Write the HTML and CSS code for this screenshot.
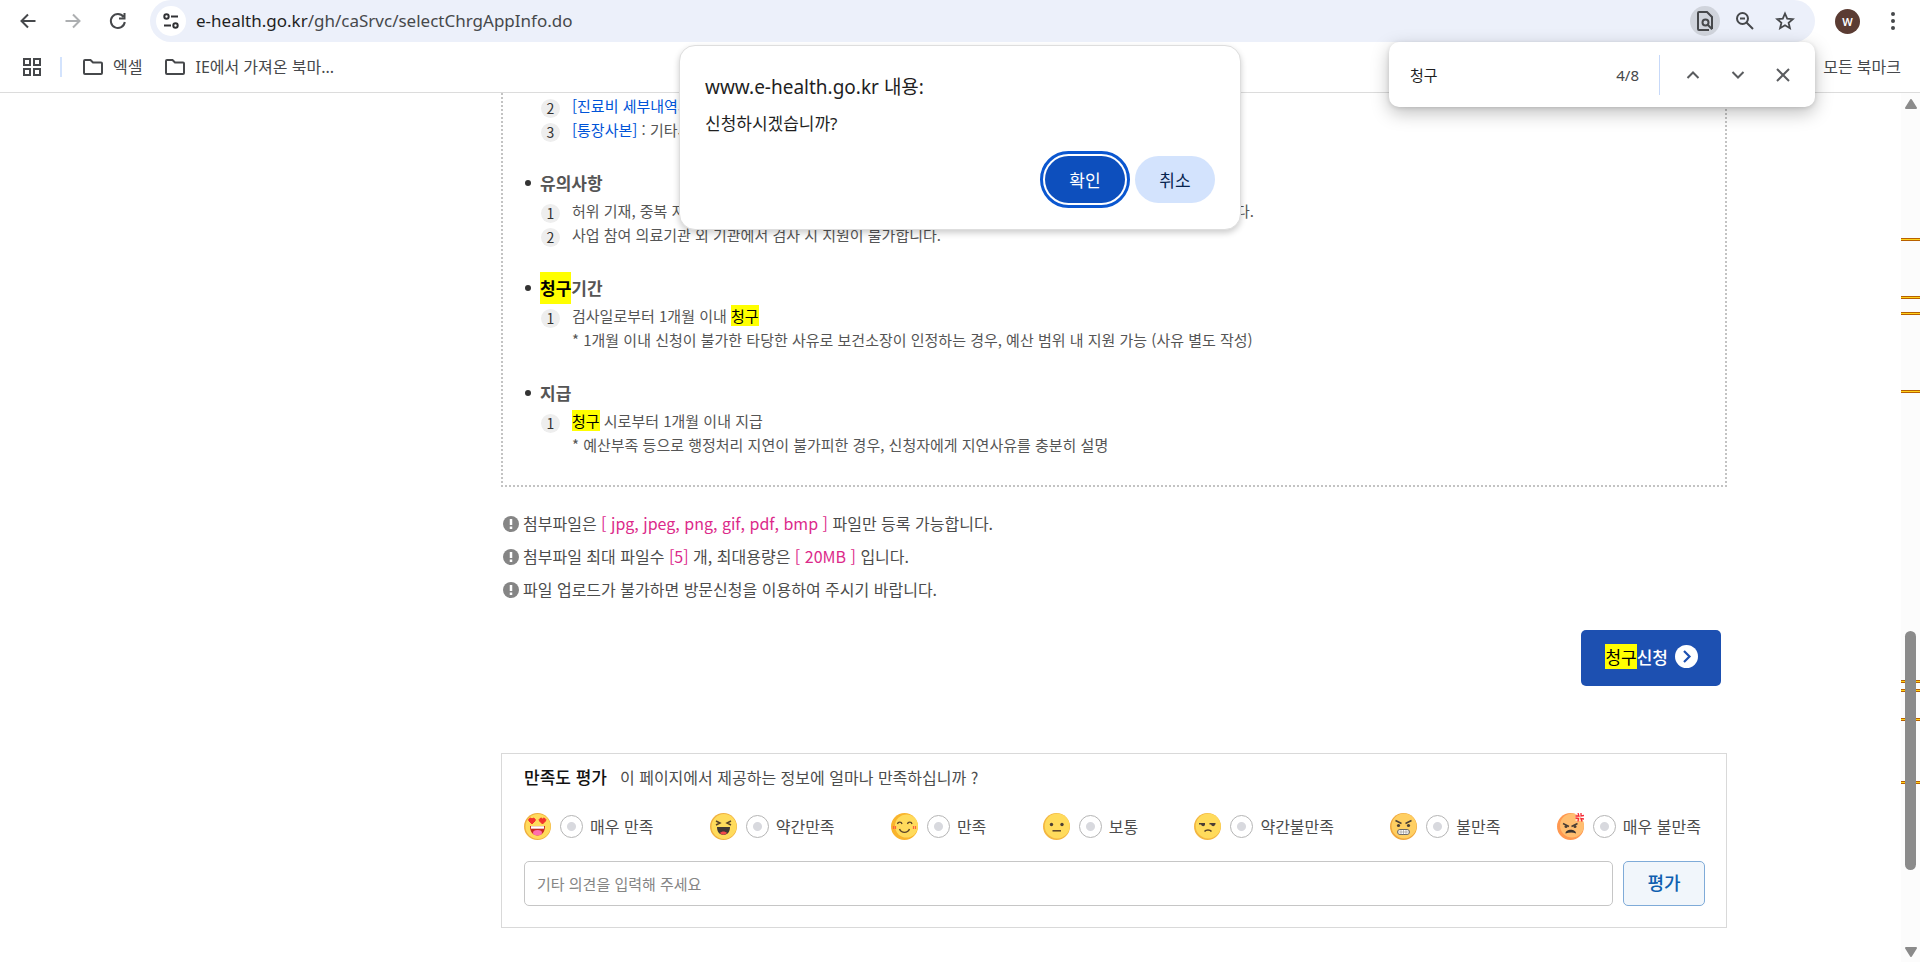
FILE: index.html
```html
<!DOCTYPE html>
<html lang="ko">
<head>
    <meta charset="UTF-8">
    <meta name="viewport" content="width=device-width, initial-scale=1.0">
    <title>e보건소 - 청구신청</title>
    <link rel="stylesheet" href="styles.css">
</head>
<body>
    <header class="browser">
        <div class="toolbar">
            <div class="nav-buttons">
                <button type="button" class="icon-btn" aria-label="뒤로">
                    <svg width="20" height="20" viewBox="0 0 20 20" fill="none" stroke="#46484b" stroke-width="2"><path d="M17.500 10H3.500M10 3.500L3.500 10l6.500 6.500"/></svg>
                </button>
                <button type="button" class="icon-btn" aria-label="앞으로">
                    <svg width="20" height="20" viewBox="0 0 20 20" fill="none" stroke="#adafb1" stroke-width="2"><path d="M2.500 10h14M10 3.500l6.500 6.500-6.500 6.500"/></svg>
                </button>
                <button type="button" class="icon-btn" aria-label="새로고침">
                    <svg width="20" height="20" viewBox="0 0 20 20" fill="none" stroke="#46484b" stroke-width="2"><path d="M15.500 5.800A7 7 0 1 0 16.800 11M16.500 2v5.500H11"/></svg>
                </button>
            </div>
            <div class="omnibox">
                <button type="button" class="round-btn site-info" aria-label="사이트 정보">
                    <svg width="18" height="18" viewBox="0 0 18 18" fill="none" stroke="#303134" stroke-width="2"><circle cx="4.500" cy="4.500" r="2.200"/><path d="M9 4.500h7M2 13.500h7"/><circle cx="13.500" cy="13.500" r="2.200"/></svg>
                </button>
                <div class="url" role="textbox" aria-label="주소창"><span class="host">e-health.go.kr</span>/gh/caSrvc/selectChrgAppInfo.do</div>
                <div class="omnibox-actions">
                    <button type="button" class="round-btn active" aria-label="페이지에서 찾기">
                        <svg width="20" height="22" viewBox="0 0 20 22" fill="none" stroke="#46484b" stroke-width="2"><path d="M14 20H4a1 1 0 0 1-1-1V3a1 1 0 0 1 1-1h8l5 5v12"/><circle cx="10.500" cy="12.500" r="3"/><path d="M12.700 14.700l4.500 4.500"/></svg>
                    </button>
                    <button type="button" class="round-btn" aria-label="축소">
                        <svg width="20" height="20" viewBox="0 0 20 20" fill="none" stroke="#46484b" stroke-width="2"><circle cx="7.500" cy="7.500" r="5.500"/><path d="M11.500 11.500l6.500 6.500M5 7.500h5"/></svg>
                    </button>
                    <button type="button" class="round-btn" aria-label="북마크 추가">
                        <svg width="20" height="20" viewBox="0 0 20 20" fill="none" stroke="#46484b" stroke-width="1.800"><path d="M10 2.500l2.200 5.100 5.600.5-4.200 3.700 1.300 5.400L10 14.300l-4.900 2.900 1.300-5.400L2.200 8.100l5.600-.5z"/></svg>
                    </button>
                </div>
            </div>
            <div class="profile">
                <button type="button" class="avatar">W</button>
                <button type="button" class="icon-btn" aria-label="메뉴">
                    <svg width="20" height="20" viewBox="0 0 20 20" fill="#46484b"><circle cx="10" cy="3" r="2"/><circle cx="10" cy="10" r="2"/><circle cx="10" cy="17" r="2"/></svg>
                </button>
            </div>
        </div>
        <nav class="bookmarks">
            <button type="button" class="apps" aria-label="앱">
                <svg width="20" height="20" viewBox="0 0 20 20" fill="none" stroke="#46484b" stroke-width="2"><path d="M2 2h6v6H2zM12 2h6v6h-6zM2 12h6v6H2zM12 12h6v6h-6z"/></svg>
            </button>
            <span class="divider"></span>
            <a class="bookmark" href="#">
                <svg width="22" height="18" viewBox="0 0 22 18" fill="none" stroke="#46484b" stroke-width="2"><path d="M2 15V3a1 1 0 0 1 1-1h5.500L11 4.500h8a1 1 0 0 1 1 1V15a1 1 0 0 1-1 1H3a1 1 0 0 1-1-1z"/></svg>
                <span>엑셀</span>
            </a>
            <a class="bookmark" href="#">
                <svg width="22" height="18" viewBox="0 0 22 18" fill="none" stroke="#46484b" stroke-width="2"><path d="M2 15V3a1 1 0 0 1 1-1h5.500L11 4.500h8a1 1 0 0 1 1 1V15a1 1 0 0 1-1 1H3a1 1 0 0 1-1-1z"/></svg>
                <span>IE에서 가져온 북마...</span>
            </a>
            <a class="bookmark all" href="#"><span>모든 북마크</span></a>
        </nav>

        <div class="find-bar">
            <input type="text" class="find-input" value="청구" aria-label="찾기">
            <span class="find-count">4/8</span>
            <span class="find-divider"></span>
            <div class="find-buttons">
                <button type="button" class="icon-btn" aria-label="이전">
                    <svg width="16" height="16" viewBox="0 0 16 16" fill="none" stroke="#5a5c5f" stroke-width="2"><path d="M2.500 11L8 5.500l5.500 5.500"/></svg>
                </button>
                <button type="button" class="icon-btn" aria-label="다음">
                    <svg width="16" height="16" viewBox="0 0 16 16" fill="none" stroke="#5a5c5f" stroke-width="2"><path d="M2.500 5L8 10.500 13.500 5"/></svg>
                </button>
                <button type="button" class="icon-btn" aria-label="닫기">
                    <svg width="16" height="16" viewBox="0 0 16 16" fill="none" stroke="#5a5c5f" stroke-width="2"><path d="M2 2l12 12M14 2L2 14"/></svg>
                </button>
            </div>
        </div>

        <div class="dialog" role="dialog" aria-labelledby="dialog-title">
            <h2 id="dialog-title">www.e-health.go.kr 내용:</h2>
            <p>신청하시겠습니까?</p>
            <div class="dialog-buttons">
                <button type="button" class="ok">확인</button>
                <button type="button" class="cancel">취소</button>
            </div>
        </div>
    </header>

    <div class="viewport">
        <main class="page">
            <section class="guide">
                <ol>
                    <li><span class="num">2</span><p><a href="#">[진료비 세부내역서]</a></p></li>
                    <li><span class="num">3</span><p><a href="#">[통장사본]</a> : 기타서류</p></li>
                </ol>
                <h3>유의사항</h3>
                <ol>
                    <li><span class="num">1</span><p class="long"><span>허위 기재, 중복 지원</span><span>다.</span></p></li>
                    <li><span class="num">2</span><p>사업 참여 의료기관 외 기관에서 검사 시 지원이 불가합니다.</p></li>
                </ol>
                <h3><mark>청구</mark>기간</h3>
                <ol>
                    <li><span class="num">1</span><p>검사일로부터 1개월 이내 <mark>청구</mark><br>* 1개월 이내 신청이 불가한 타당한 사유로 보건소장이 인정하는 경우, 예산 범위 내 지원 가능 (사유 별도 작성)</p></li>
                </ol>
                <h3>지급</h3>
                <ol>
                    <li><span class="num">1</span><p><mark>청구</mark> 시로부터 1개월 이내 지급<br>* 예산부족 등으로 행정처리 지연이 불가피한 경우, 신청자에게 지연사유를 충분히 설명</p></li>
                </ol>
            </section>

            <ul class="notes">
                <li>
                    <svg width="16" height="16" viewBox="0 0 16 16"><circle cx="8" cy="8" r="8" fill="#858585"/><path d="M8 3v6M8 10.500v2.500" stroke="#fff" stroke-width="2.500"/></svg>
                    <p>첨부파일은 <em>[ jpg, jpeg, png, gif, pdf, bmp ]</em> 파일만 등록 가능합니다.</p>
                </li>
                <li>
                    <svg width="16" height="16" viewBox="0 0 16 16"><circle cx="8" cy="8" r="8" fill="#858585"/><path d="M8 3v6M8 10.500v2.500" stroke="#fff" stroke-width="2.500"/></svg>
                    <p>첨부파일 최대 파일수 <em>[5]</em> 개, 최대용량은 <em>[ 20MB ]</em> 입니다.</p>
                </li>
                <li>
                    <svg width="16" height="16" viewBox="0 0 16 16"><circle cx="8" cy="8" r="8" fill="#858585"/><path d="M8 3v6M8 10.500v2.500" stroke="#fff" stroke-width="2.500"/></svg>
                    <p>파일 업로드가 불가하면 방문신청을 이용하여 주시기 바랍니다.</p>
                </li>
            </ul>

            <div class="actions">
                <button type="button" class="apply">
                    <span><mark>청구</mark>신청</span>
                    <svg width="23" height="23" viewBox="0 0 23 23"><circle cx="11.500" cy="11.500" r="11.500" fill="#fff"/><path d="M9 6l5.500 5.500L9 17" fill="none" stroke="#1d50b1" stroke-width="2.200"/></svg>
                </button>
            </div>

            <form class="survey">
                <div class="survey-title">
                    <strong>만족도 평가</strong>
                    <span>이 페이지에서 제공하는 정보에 얼마나 만족하십니까 ?</span>
                </div>
                <div class="ratings">
                    <label>
                        <svg width="27" height="27" viewBox="0 0 27 27"><circle cx="13.500" cy="13.500" r="13.500" fill="#f0b040"/><circle cx="14" cy="13.500" r="12.500" fill="#ffdb5c"/><path d="M8 11L5 8a1.700 1.700 0 0 1 3-2 1.700 1.700 0 0 1 3 2zM18.500 11l-3-3a1.700 1.700 0 0 1 3-2 1.700 1.700 0 0 1 3 2z" fill="#f3332e" stroke="#f3332e"/><path d="M6 13h15c0 6-3 9.500-7.500 9.500S6 19 6 13z" fill="#c92a20"/><path d="M7 13.200h13v2.500H7z" fill="#fff"/><ellipse cx="13.500" cy="19.800" rx="4.500" ry="2.700" fill="#ff6fae"/></svg>
                        <input type="radio" name="score" value="7">매우 만족
                    </label>
                    <label>
                        <svg width="27" height="27" viewBox="0 0 27 27"><circle cx="13.500" cy="13.500" r="13.500" fill="#f0b040"/><circle cx="14" cy="13.500" r="12.500" fill="#ffdb5c"/><path d="M6 8l4 2-4 2M21 8l-4 2 4 2" fill="none" stroke="#5a4328" stroke-width="1.500"/><path d="M7 14h13c0 5-2.500 7.800-6.500 7.800S7 19 7 14z" fill="#403734"/><path d="M10 20c1.800-2 5.200-2 7 0-1.800 2.200-5.200 2.200-7 0z" fill="#f4494a"/></svg>
                        <input type="radio" name="score" value="6">약간만족
                    </label>
                    <label>
                        <svg width="27" height="27" viewBox="0 0 27 27"><circle cx="13.500" cy="13.500" r="13.500" fill="#f9b42c"/><circle cx="15.500" cy="13" r="11.500" fill="#ffdb5c"/><path d="M6.500 11c.5-2.500 4-2.500 4.500 0M16.500 11c.5-2.500 4-2.500 4.500 0M8.500 16c2 4.500 8 4.500 10 0" fill="none" stroke="#5a4328" stroke-width="1.400"/><path d="M2.500 13v3M4.500 13v3M22.500 13v3M24.500 13v3" stroke="#ff6040" stroke-width="1.200"/></svg>
                        <input type="radio" name="score" value="5">만족
                    </label>
                    <label>
                        <svg width="27" height="27" viewBox="0 0 27 27"><circle cx="13.500" cy="13.500" r="13.500" fill="#f3b640"/><circle cx="14.200" cy="13" r="12.500" fill="#ffdb5c"/><circle cx="8.500" cy="11.500" r="1.700" fill="#4b3f35"/><circle cx="19" cy="11.500" r="1.700" fill="#4b3f35"/><path d="M9.500 17.800h8.500" stroke="#5a4328" stroke-width="1.500"/></svg>
                        <input type="radio" name="score" value="4">보통
                    </label>
                    <label>
                        <svg width="27" height="27" viewBox="0 0 27 27"><circle cx="13.500" cy="13.500" r="13.500" fill="#f3b640"/><circle cx="14.200" cy="13" r="12.500" fill="#ffdb5c"/><path d="M5 10.700h6M15.500 10.700h6" stroke="#4b3f35" stroke-width="1.400"/><path d="M7 11h4c0 3-3.500 3-4 0zM17 11h4c0 3-3.500 3-4 0z" fill="#4b3f35"/><path d="M10.500 18.500c1.500-2 5.500-2 7 0" fill="none" stroke="#5a4328" stroke-width="1.500"/></svg>
                        <input type="radio" name="score" value="3">약간불만족
                    </label>
                    <label>
                        <svg width="27" height="27" viewBox="0 0 27 27"><circle cx="13.500" cy="13.500" r="13.500" fill="#efa63c"/><circle cx="14" cy="13" r="12.500" fill="#ffcf62"/><path d="M5.500 7.500l6 3M21.500 7.500l-6 3" stroke="#4b3f35" stroke-width="1.500"/><circle cx="8.500" cy="12.500" r="1.600" fill="#4b3f35"/><circle cx="18.500" cy="12.500" r="1.600" fill="#4b3f35"/><rect x="7.500" y="16.500" width="12" height="5" rx="2.500" fill="#fff" stroke="#6b6762"/><path d="M8 19h11M11 17v4.500M13.500 17v4.500M16 17v4.500" stroke="#8f8b86" stroke-width=".6"/></svg>
                        <input type="radio" name="score" value="2">불만족
                    </label>
                    <label>
                        <svg width="27" height="27" viewBox="0 0 27 27"><circle cx="13.500" cy="13.500" r="13.500" fill="#ff9850"/><circle cx="15" cy="12.500" r="12" fill="#ffbe70"/><path d="M6 10.500l6 3M20.500 10.500l-6 3" stroke="#4b3f35" stroke-width="1.400"/><circle cx="9" cy="13.500" r="1.500" fill="#4b3f35"/><circle cx="18" cy="13.500" r="1.500" fill="#4b3f35"/><path d="M8.500 20.500c0-5 10.500-5 10.500 0-3-1.500-7-1.200-10.500 0z" fill="#383330"/><rect x="18.500" y="0" width="8" height="8" fill="#fff" opacity=".5"/><path d="M21 0l1 3-3.500 0M24 0v3l3-.5M18.500 5l3 .5-.5 3M27 6l-3-.5 1 3" fill="none" stroke="#f52a35" stroke-width="1.300"/></svg>
                        <input type="radio" name="score" value="1">매우 불만족
                    </label>
                </div>
                <div class="opinion">
                    <input type="text" placeholder="기타 의견을 입력해 주세요" aria-label="기타 의견">
                    <button type="button">평가</button>
                </div>
            </form>
        </main>

        <div class="scrollbar">
            <span class="tick" style="top: 16.700%"></span>
            <span class="tick" style="top: 23.400%"></span>
            <span class="tick" style="top: 25.200%"></span>
            <span class="tick" style="top: 34.200%"></span>
            <span class="tick" style="top: 67.500%"></span>
            <span class="tick" style="top: 68.600%"></span>
            <span class="tick" style="top: 71.900%"></span>
            <span class="tick" style="top: 79.200%"></span>
            <span class="thumb" style="top: 61.900%; height: 27.500%"></span>
            <svg width="14" height="10" viewBox="0 0 14 10"><path d="M7 1l5 8H2z" fill="#8b8b8b" stroke="#8b8b8b" stroke-width="2" stroke-linejoin="round"/></svg>
            <svg width="14" height="10" viewBox="0 0 14 10"><path d="M7 9l5-8H2z" fill="#8b8b8b" stroke="#8b8b8b" stroke-width="2" stroke-linejoin="round"/></svg>
        </div>
    </div>
</body>
</html>
```

FILE: styles.css
```css
* {
    box-sizing: border-box;
}
body {
    display: flex;
    flex-direction: column;
    height: 100vh;
    margin: 0;
    overflow: hidden;
    background: #fff;
    color: #4c4c4c;
    font-family: "Noto Sans CJK KR", sans-serif;
    font-size: 16px;
}
h2, h3, p, ol, ul {
    margin: 0;
    padding: 0;
}
ol, ul {
    list-style: none;
}
button, input {
    font-family: inherit;
}
button {
    padding: 0;
    border: none;
    background: none;
    cursor: pointer;
}
a {
    color: inherit;
    text-decoration: none;
}
svg {
    display: block;
    flex-shrink: 0;
}
mark {
    background: #ff0;
    color: #000;
}

/* browser chrome */
.browser {
    position: relative;
    z-index: 1;
    flex-shrink: 0;
    border-bottom: 1px solid #dcdcdc;
    background: #fff;
    color: #46484b;
    font-family: "Noto Sans", "Noto Sans CJK KR", sans-serif;
}
.toolbar {
    display: flex;
    align-items: center;
    height: 42px;
}
.icon-btn {
    display: flex;
    align-items: center;
    justify-content: center;
    width: 30px;
    height: 30px;
}
.nav-buttons {
    display: flex;
    gap: 15px;
    width: 150px;
    padding-left: 13px;
}
.omnibox {
    display: flex;
    flex: 1;
    align-items: center;
    height: 42px;
    padding: 0 15px 0 6px;
    border-radius: 21px;
    background: #ecf0fa;
}
.round-btn {
    display: flex;
    align-items: center;
    justify-content: center;
    width: 30px;
    height: 30px;
    border-radius: 50%;
}
.site-info {
    background: #fff;
}
.url {
    flex: 1;
    padding-left: 10px;
    font-size: 17px;
    line-height: 24px;
}
.host {
    color: #1f1f1f;
}
.omnibox-actions {
    display: flex;
    gap: 10px;
}
.round-btn.active {
    background: #d0d4dc;
}
.profile {
    display: flex;
    align-items: center;
    justify-content: space-between;
    width: 105px;
    padding: 0 12px 0 20px;
}
.avatar {
    width: 25px;
    height: 25px;
    border-radius: 50%;
    background: #5b3c33;
    color: #fff;
    font-size: 11px;
    font-weight: 600;
}
.bookmarks {
    display: flex;
    align-items: center;
    height: 50px;
    padding: 0 19px 0 22px;
}
.divider {
    width: 2px;
    height: 20px;
    margin: 0 20px 0 18px;
    background: #d3e3fd;
}
.bookmark {
    display: flex;
    align-items: center;
    gap: 9px;
    margin-right: 22px;
    font-size: 16px;
}
.bookmark span {
    padding-bottom: 3px;
}
.bookmark.all {
    margin: 0 0 0 auto;
}
.find-bar {
    position: absolute;
    top: 42px;
    right: 105px;
    display: flex;
    align-items: center;
    width: 426px;
    height: 65px;
    padding: 0 17px 0 21px;
    border-radius: 10px;
    background: #fff;
    box-shadow: 0 6px 18px rgba(0, 0, 0, 0.25), 0 1px 4px rgba(0, 0, 0, 0.12);
}
.find-input {
    flex: 1;
    min-width: 0;
    padding: 0;
    border: none;
    outline: none;
    color: #1f1f1f;
    font-size: 15px;
}
.find-count {
    font-size: 15px;
}
.find-divider {
    width: 1px;
    height: 40px;
    margin: 0 18px 0 20px;
    background: #c7d9f9;
}
.find-buttons {
    display: flex;
    gap: 15px;
}
.dialog {
    position: absolute;
    top: 45px;
    left: 50%;
    width: 562px;
    margin-left: -281px;
    padding: 26px 25px;
    border: 1px solid #dedede;
    border-radius: 16px;
    background: #fff;
    box-shadow: 0 3px 6px rgba(0, 0, 0, 0.2);
    color: #1f1f1f;
}
.dialog h2 {
    font-size: 19px;
    font-weight: 400;
    line-height: 30px;
}
.dialog p {
    margin-top: 9px;
    font-size: 17px;
    line-height: 26px;
}
.dialog-buttons {
    display: flex;
    justify-content: flex-end;
    gap: 10px;
    margin-top: 19px;
}
.dialog-buttons button {
    width: 80px;
    height: 47px;
    border-radius: 24px;
    font-size: 17px;
}
.dialog-buttons .ok {
    outline: 3px solid #0b57d0;
    outline-offset: 2px;
    background: #0d4fbd;
    color: #fff;
}
.dialog-buttons .cancel {
    background: #d3e3fd;
    color: #06244f;
}

/* page */
.viewport {
    display: flex;
    flex: 1;
    min-height: 0;
}
.page {
    flex: 1;
    max-width: 1727px;
    padding-left: 501px;
}
.guide {
    padding: 1px 22px 28px;
    border: 2px dotted #c3c3c3;
    border-top: none;
}
.guide h3 {
    display: flex;
    align-items: center;
    margin-top: 25px;
    color: #555;
    font-size: 17px;
    font-weight: 700;
    line-height: 32px;
}
.guide h3::before {
    content: "";
    width: 6px;
    height: 6px;
    margin-right: 9px;
    border-radius: 50%;
    background: #333;
}
.guide li {
    display: flex;
    align-items: flex-start;
    gap: 12px;
    padding-left: 16px;
    color: #555;
    font-size: 15px;
    line-height: 24px;
}
.guide li a {
    color: #0054d8;
}
.num {
    width: 19px;
    height: 19px;
    margin-top: 5px;
    border-radius: 50%;
    background: #eee;
    color: #333;
    font-size: 14px;
    line-height: 19px;
    text-align: center;
}
.long {
    display: flex;
    justify-content: space-between;
    width: 682px;
}
.notes {
    margin-top: 20px;
}
.notes li {
    display: flex;
    align-items: center;
    gap: 4px;
    padding-left: 2px;
    line-height: 33px;
}
.notes em {
    color: #dc2a8a;
    font-style: normal;
}
.actions {
    display: flex;
    justify-content: flex-end;
    margin: 24px 6px 67px;
}
.apply {
    display: flex;
    align-items: center;
    gap: 7px;
    height: 56px;
    padding: 0 23px 4px 24px;
    border-radius: 5px;
    background: #1d50b1;
    color: #fff;
    font-size: 17px;
    font-weight: 500;
}
.apply mark {
    font-weight: 400;
}
.survey {
    padding: 11px 21px 21px 22px;
    border: 1px solid #d9d9d9;
}
.survey-title {
    display: flex;
    gap: 13px;
    line-height: 24px;
}
.survey-title strong {
    color: #111;
    font-size: 17px;
    font-weight: 500;
}
.ratings {
    display: flex;
    justify-content: space-between;
    margin: 24px 4px 21px 0;
}
.ratings label {
    display: flex;
    align-items: center;
    line-height: 27px;
}
.ratings input {
    width: 23px;
    height: 23px;
    margin: 0 7px 0 9px;
    border: 1px solid #b5b5b5;
    border-radius: 50%;
    background: radial-gradient(circle, #d8d9de 4px, #fff 5px);
    appearance: none;
}
.opinion {
    display: flex;
    gap: 10px;
}
.opinion input {
    flex: 1;
    height: 45px;
    padding: 0 12px;
    border: 1px solid #c6c6c6;
    border-radius: 5px;
    font-size: 15px;
}
.opinion input::placeholder {
    color: #858585;
}
.opinion button {
    width: 82px;
    height: 45px;
    padding-bottom: 3px;
    border: 1px solid #7fabd8;
    border-radius: 5px;
    background: #f1f6fb;
    color: #0f5fb0;
    font-size: 18px;
    font-weight: 500;
}

.scrollbar {
    position: relative;
    display: flex;
    flex-direction: column;
    align-items: center;
    justify-content: space-between;
    width: 19px;
    margin-left: auto;
    padding: 6px 0 5px;
    background: #fcfcfc;
}
.tick {
    position: absolute;
    left: 0;
    width: 100%;
    height: 3px;
    border: 1px solid #b86000;
    border-width: 1px 0;
    background: #ffd21a;
}
.thumb {
    position: absolute;
    left: 4px;
    width: 11px;
    border-radius: 6px;
    background: #8b8b8b;
}
```
